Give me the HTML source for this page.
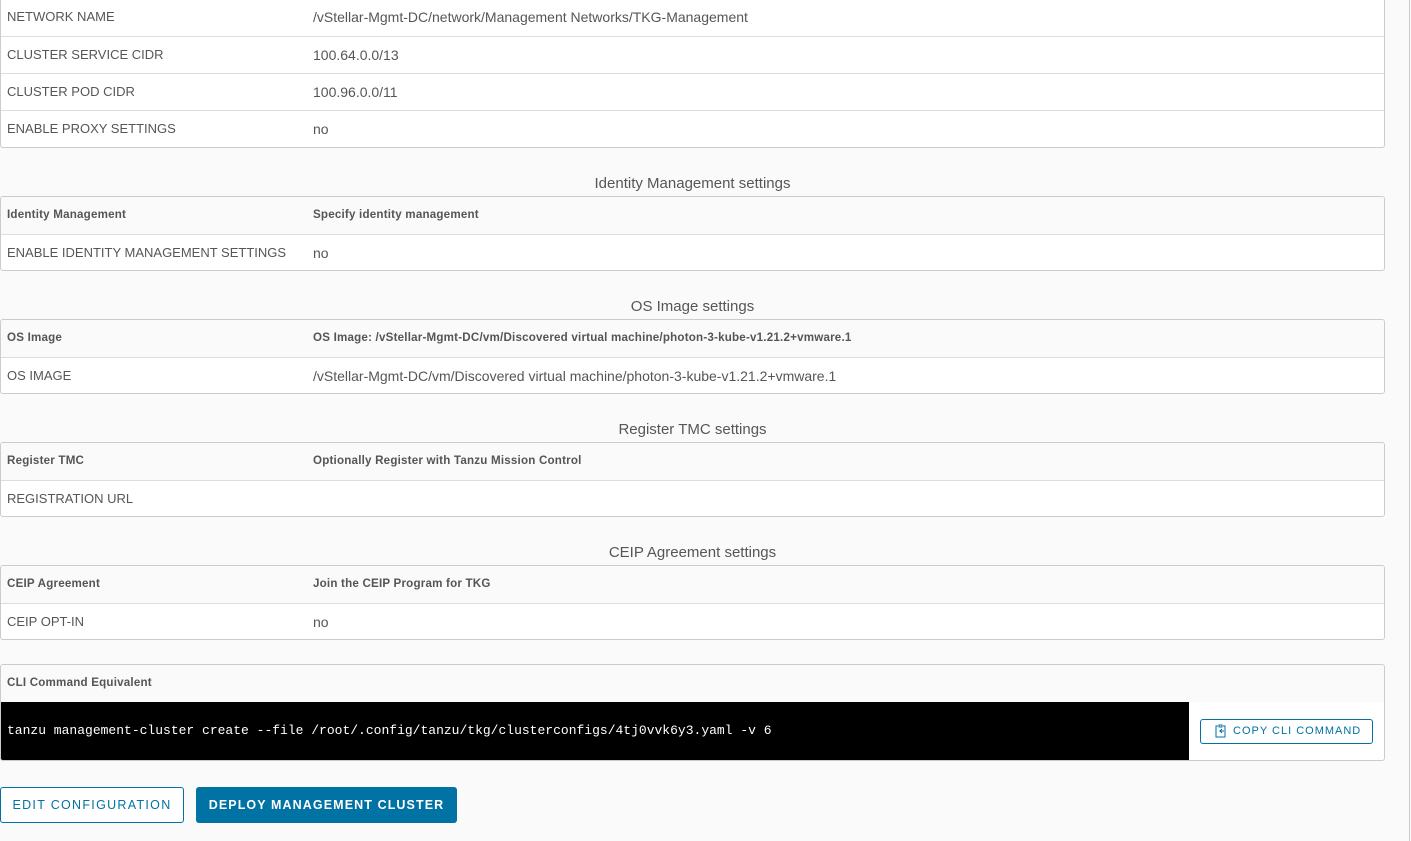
<!DOCTYPE html>
<html><head><style>
*{box-sizing:border-box;margin:0;padding:0}
body{width:1411px;height:841px;background:#fafafa;font-family:"Liberation Sans",sans-serif;color:#565656;position:relative;overflow:hidden}
.card{position:absolute;left:0;width:1385px;border:1px solid #ccc;border-radius:3px;background:#fff;overflow:hidden}
.row{height:37px;border-top:1px solid #ddd;position:relative;font-size:14px;line-height:36px}
.row:first-child{border-top:none}
.row span{position:absolute;top:0;white-space:nowrap}
.k{left:6px;font-size:13px}.v{left:312px}
.hd{background:#fafafa;font-size:11.6px;font-weight:bold;color:#555;letter-spacing:.2px}
.hd .k{font-size:11.6px}
.t{position:absolute;left:0;width:1385px;text-align:center;font-size:15px;color:#565656}
.vline{position:absolute;left:1409px;top:0;width:1px;height:841px;background:#ccc}
</style></head><body>
<div class="vline"></div>
<div class="card" style="top:-1px;height:149px;border-top:none;border-radius:0 0 3px 3px">
<div class="row"><span class="k">NETWORK NAME</span><span class="v">/vStellar-Mgmt-DC/network/Management Networks/TKG-Management</span></div>
<div class="row"><span class="k">CLUSTER SERVICE CIDR</span><span class="v">100.64.0.0/13</span></div>
<div class="row"><span class="k">CLUSTER POD CIDR</span><span class="v">100.96.0.0/11</span></div>
<div class="row"><span class="k">ENABLE PROXY SETTINGS</span><span class="v">no</span></div>
</div>

<div class="t" style="top:175px">Identity Management settings</div>
<div class="card" style="top:196px;height:75px">
<div class="row hd"><span class="k">Identity Management</span><span class="v">Specify identity management</span></div>
<div class="row"><span class="k">ENABLE IDENTITY MANAGEMENT SETTINGS</span><span class="v">no</span></div>
</div>

<div class="t" style="top:298px">OS Image settings</div>
<div class="card" style="top:319px;height:75px">
<div class="row hd"><span class="k">OS Image</span><span class="v">OS Image: /vStellar-Mgmt-DC/vm/Discovered virtual machine/photon-3-kube-v1.21.2+vmware.1</span></div>
<div class="row"><span class="k">OS IMAGE</span><span class="v">/vStellar-Mgmt-DC/vm/Discovered virtual machine/photon-3-kube-v1.21.2+vmware.1</span></div>
</div>

<div class="t" style="top:421px">Register TMC settings</div>
<div class="card" style="top:442px;height:75px">
<div class="row hd"><span class="k">Register TMC</span><span class="v">Optionally Register with Tanzu Mission Control</span></div>
<div class="row"><span class="k">REGISTRATION URL</span></div>
</div>

<div class="t" style="top:544px">CEIP Agreement settings</div>
<div class="card" style="top:565px;height:75px">
<div class="row hd"><span class="k">CEIP Agreement</span><span class="v">Join the CEIP Program for TKG</span></div>
<div class="row"><span class="k">CEIP OPT-IN</span><span class="v">no</span></div>
</div>

<div class="card" style="top:664px;height:97px">
<div class="row hd"><span class="k">CLI Command Equivalent</span></div>
<div style="position:absolute;left:0;top:37px;width:1188px;height:59px;background:#000;color:#fff;font-family:'Liberation Mono',monospace;font-size:13px;line-height:57px;padding-left:6px;white-space:nowrap">tanzu management-cluster create --file /root/.config/tanzu/tkg/clusterconfigs/4tj0vvk6y3.yaml -v 6</div>
<div style="position:absolute;left:1199px;top:54px;width:173px;height:25px;border:1px solid #0072a3;border-radius:3px;color:#0072a3;font-size:11px;letter-spacing:1px;line-height:23px;padding-left:32px;white-space:nowrap">COPY CLI COMMAND
<svg style="position:absolute;left:14px;top:4px" width="12" height="14" viewBox="0 0 12 14" fill="none" stroke="#0072a3" stroke-width="1"><path d="M3 2H1v11h9V2H8M4 1h3v2H4z M9 7H5l2-2M5 7l2 2"/></svg></div>
</div>

<div style="position:absolute;left:0;top:787px;width:184px;height:36px;border:1px solid #0072a3;border-radius:3px;background:#fff;color:#0072a3;font-size:12.5px;letter-spacing:1.3px;text-align:center;line-height:34px">EDIT CONFIGURATION</div>
<div style="position:absolute;left:196px;top:787px;width:261px;height:36px;border-radius:3px;background:#0072a3;color:#fff;font-size:12.5px;font-weight:bold;letter-spacing:1.1px;text-align:center;line-height:36px">DEPLOY MANAGEMENT CLUSTER</div>
</body></html>
